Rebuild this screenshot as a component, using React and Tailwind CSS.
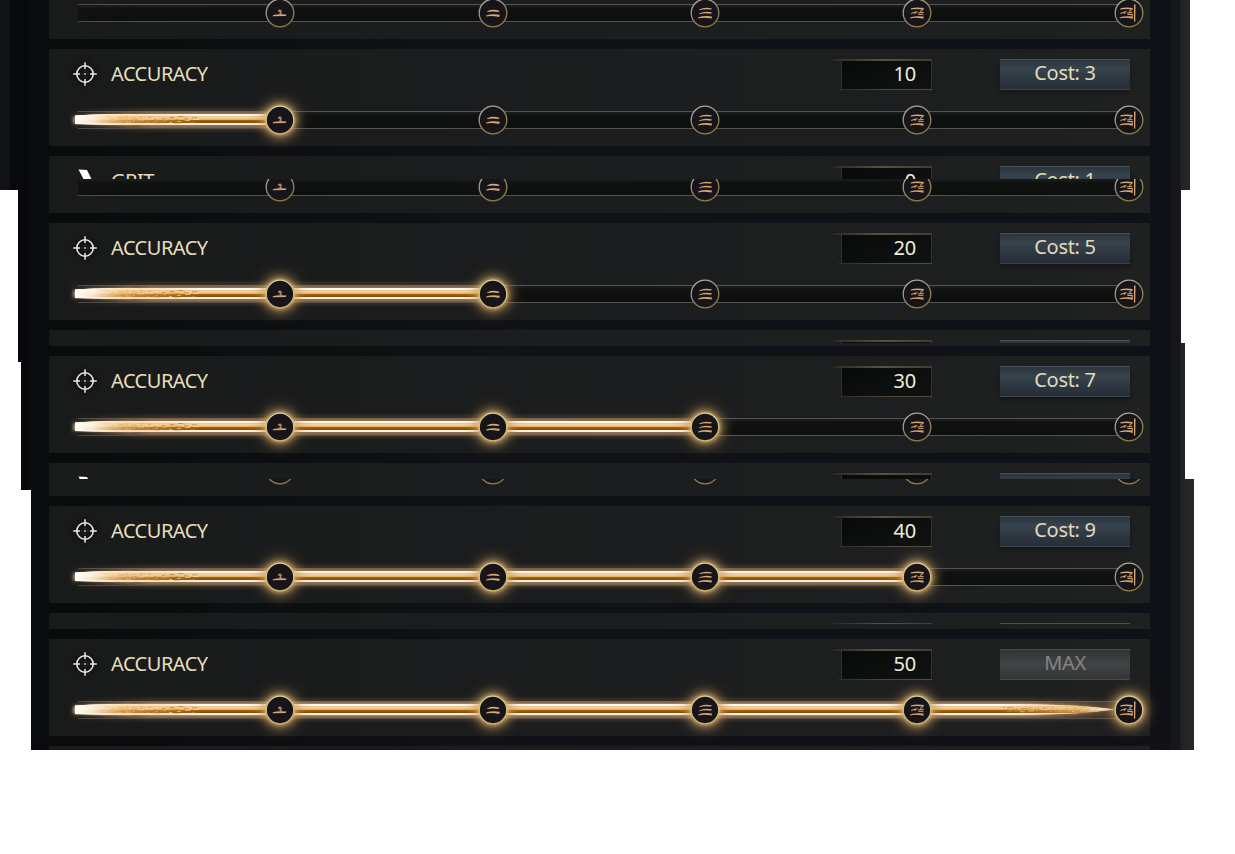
import React from 'react';

const GLYPHS = [
  ['M7.4 15.9 Q13 14.9 20.4 15.6 L19.8 17.1 L6.4 17.3Z', 'M12.3 12.2 L14 11 L15.3 12.4 L14 13.8 M12.4 11.4 L13.4 13 M13.5 14.4 L16 15.2'],
  ['M8.5 12.2 Q13 9.8 20.4 11.7 L20 12.9 Q13 11.8 7.6 13.1Z M7.2 16.4 Q13 14.6 20.8 15.8 L20.2 18 Q13 16.5 7.2 17.4Z', ''],
  ['M8.6 10.2 Q13 7.7 20.8 9.2 L20.2 10.6 Q13 9.7 8.2 11.3Z M8.2 14.4 Q13 11.8 20.8 13.3 L20.2 14.7 Q13 13.7 7.8 15.3Z M7.2 18.4 Q13 16.2 21 17.4 L20.6 19.4 Q13 17.9 7.2 19.4Z', ''],
  ['M8.2 9.2 Q13 8 20.8 8.9 L20.2 10.5 Q13 9.7 7.6 10.5Z M7.2 18.4 Q13 16.4 20.6 17.6 L20.4 19.8 Q13 18.1 7.2 19.4Z', 'M20.6 9.6 L17.2 12.6 M8.2 14.5 L13.2 12.8 L11.8 14.8 M14.5 14 L20.8 13.2 M15.5 15.5 L20.5 15.2'],
  ['M5.6 9.3 Q10 8 17.6 8.9 L17.2 10.5 Q10 9.7 5.2 10.5Z M4.6 18.4 Q10 16.4 17.2 17.6 L17 19.4 Q10 18 4.6 19.3Z M19 5.4 L20.5 5.6 L20.2 22.8 L19 22.6Z', 'M17.4 9.6 L14.2 12.6 M5.4 14.5 L10.6 12.8 L9.2 14.8 M12 14 L17.4 13.2 M12.5 15.5 L17 15.2 M17.3 15 L17.1 20'],
];

function Node({ index, lit }) {
  const [fill, line] = GLYPHS[index];
  return (
    <div
      className={
        lit
          ? 'size-7 rounded-full bg-[#17151a] shadow-[0_0_4px_1px_rgba(240,196,125,0.75),0_0_8px_4px_rgba(200,155,95,0.55),0_0_16px_5px_rgba(180,140,90,0.4)]'
          : 'size-7 rounded-full bg-[#17151a]'
      }
    >
      <svg viewBox="0 0 28 28" className="block size-7 overflow-visible">
        <defs>
          <linearGradient id="ring" x1="0.2" y1="0" x2="0.75" y2="1">
            <stop offset="0" stopColor="#b1b1a4" />
            <stop offset="0.5" stopColor="#928968" />
            <stop offset="1" stopColor="#8a793d" />
          </linearGradient>
          <linearGradient id="ringLit" x1="0" y1="0" x2="0" y2="1">
            <stop offset="0" stopColor="#d3d598" />
            <stop offset="1" stopColor="#cdb56a" />
          </linearGradient>
        </defs>
        <circle cx="14" cy="14" r="13.8" fill="none" stroke={lit ? 'url(#ringLit)' : 'url(#ring)'} strokeWidth="1.3" />
        <path d={fill} fill="#d3a875" />
        {line && <path d={line} fill="none" stroke="#cfa06c" strokeWidth="1.1" />}
      </svg>
    </div>
  );
}

const SPECKS = Array.from({ length: 64 }, (_, i) => ({
  x: 28 + ((i * 37) % 96),
  y: 8.6 + ((i * 13) % 27) / 4,
  w: 2 + ((i * 7) % 5),
  c: ['#b97526', '#ffe9bd', '#9c6110', '#e5a85c'][i % 4],
}));

function Blade({ level }) {
  const w = 2 + level * 212.25;
  const full = level === 5;
  const end = full ? 1041 : w;
  const body = full
    ? 'M3 9.5 Q22 8.4 36 8 H950 Q1012 8.8 1043 13.5 Q1012 18.2 950 19 H36 Q22 18.6 3 18Z'
    : `M3 9.5 Q22 8.4 36 8 H${w} V19 H36 Q22 18.6 3 18Z`;
  return (
    <svg className="absolute left-[-6px] top-0 block h-7 overflow-visible" width={w} height="28" viewBox={`0 0 ${w} 28`}>
      <defs>
        <linearGradient id="metal" x1="0" y1="8" x2="0" y2="19" gradientUnits="userSpaceOnUse">
          <stop offset="0" stopColor="#fff6ec" />
          <stop offset="0.16" stopColor="#fff6ec" />
          <stop offset="0.2" stopColor="#e9c493" />
          <stop offset="0.34" stopColor="#f5d6a0" />
          <stop offset="0.5" stopColor="#e8b568" />
          <stop offset="0.55" stopColor="#a9650f" />
          <stop offset="0.78" stopColor="#874e02" />
          <stop offset="0.83" stopColor="#fff4e6" />
          <stop offset="1" stopColor="#fdeedd" />
        </linearGradient>
        <linearGradient id="halo" x1="0" y1="0" x2="0" y2="27" gradientUnits="userSpaceOnUse">
          <stop offset="0" stopColor="#6b5238" stopOpacity="0" />
          <stop offset="0.17" stopColor="#5b4835" stopOpacity="0.5" />
          <stop offset="0.18" stopColor="#6d5c4c" stopOpacity="0.9" />
          <stop offset="0.22" stopColor="#80674d" stopOpacity="0.95" />
          <stop offset="0.3" stopColor="#957655" />
          <stop offset="0.7" stopColor="#957655" />
          <stop offset="0.81" stopColor="#7a634b" stopOpacity="0.95" />
          <stop offset="0.83" stopColor="#5b4835" stopOpacity="0.5" />
          <stop offset="1" stopColor="#6b5238" stopOpacity="0" />
        </linearGradient>
        <linearGradient id="tip" x1="2" x2="130" y1="0" y2="0" gradientUnits="userSpaceOnUse">
          <stop offset="0" stopColor="#ffffff" />
          <stop offset="0.15" stopColor="#fff4e2" stopOpacity="0.9" />
          <stop offset="0.4" stopColor="#f6c886" stopOpacity="0.5" />
          <stop offset="1" stopColor="#e2a75f" stopOpacity="0" />
        </linearGradient>
        <linearGradient id="point" x1="930" x2="1043" y1="0" y2="0" gradientUnits="userSpaceOnUse">
          <stop offset="0" stopColor="#e2a75f" stopOpacity="0" />
          <stop offset="0.7" stopColor="#eec58a" stopOpacity="0.6" />
          <stop offset="1" stopColor="#ffffff" />
        </linearGradient>
        <linearGradient id="fadeIn" x1="-2" x2="80" y1="0" y2="0" gradientUnits="userSpaceOnUse">
          <stop offset="0" stopColor="#ffffff" stopOpacity="0.03" />
          <stop offset="1" stopColor="#ffffff" />
        </linearGradient>
        <linearGradient id="fadeOut" x1="950" x2="1041" y1="0" y2="0" gradientUnits="userSpaceOnUse">
          <stop offset="0" stopColor="#ffffff" />
          <stop offset="1" stopColor="#ffffff" stopOpacity="0.35" />
        </linearGradient>
        <mask id="startMask" maskUnits="userSpaceOnUse" x="-4" y="0" width="1060" height="28">
          <rect x="-4" width="404" height="28" fill="url(#fadeIn)" />
          <rect x="400" width="650" height="28" fill="url(#fadeOut)" />
        </mask>
        <filter id="soft" filterUnits="userSpaceOnUse" x="-10" y="-6" width="1070" height="40">
          <feGaussianBlur stdDeviation="1.8" />
        </filter>
      </defs>
      <rect x="-3" y="0" width={end + 3} height="27" fill="url(#halo)" mask="url(#startMask)" />
      <path d="M1 10.5 L60 8.5 V18.5 L1 17.5Z" fill="#ffdca8" opacity="0.6" filter="url(#soft)" />
      <path d={body} fill={full ? '#ffcf84' : 'none'} opacity="0.45" filter="url(#soft)" />
      <path d={body} fill="url(#metal)" />
      {SPECKS.map((s, i) => (
        <rect key={i} x={s.x} y={s.y + 1.4} width={s.w} height="1" fill={s.c} opacity="0.6" />
      ))}
      {full &&
        SPECKS.map((s, i) => (
          <rect key={i} x={s.x + 903} y={11 + (s.y - 8.6) * 0.65} width={s.w} height="1" fill={s.c} opacity="0.6" />
        ))}
      <path d="M3 9.5 Q22 8.4 36 8 H130 V19 H36 Q22 18.6 3 18Z" fill="url(#tip)" />
      {full && <path d="M930 8 H950 Q1012 8.8 1043 13.5 Q1012 18.2 950 19 H930Z" fill="url(#point)" />}
    </svg>
  );
}

function Slider({ level }) {
  return (
    <div className="relative ml-[29px] flex h-7 w-[1051px] items-center">
      <div className="mt-[-1px] h-[18px] w-full border-y border-t-[#535351] border-b-[#555352] bg-linear-to-b from-[#191b1b] from-10% via-[#101210] via-20% to-[#0d0f0e] mask-l-from-[94%] mask-l-to-[130%]" />
      {level > 0 && <Blade level={level} />}
      <div className="absolute left-[188.4px] top-0 flex w-[877px] justify-between">
        {GLYPHS.map((_, i) => (
          <Node key={i} index={i} lit={i < level} />
        ))}
      </div>
    </div>
  );
}

function Crosshair() {
  return (
    <svg viewBox="0 0 24 24" className="size-6 drop-shadow-[0_0_3px_#000]" fill="none" stroke="#e9e9e7" strokeWidth="1.6">
      <circle cx="12" cy="12" r="8.2" />
      <path d="M12 0.2V7 M12 17v6.8 M0.2 12H7 M17 12h6.8" strokeWidth="1.5" />
      <path d="M11.2 12h1.6" strokeWidth="1.6" />
      <path d="M8.6 12h0.9 M14.5 12h0.9 M12 8.6v0.9 M12 14.5v0.9" strokeWidth="1" opacity="0.35" />
    </svg>
  );
}

function Shard() {
  return (
    <svg viewBox="0 0 24 24" className="size-6" fill="#ffffff">
      <path d="M5.5 0.5 L14 1 L19.5 12 L12 23 L10.5 10Z" />
    </svg>
  );
}

function ValueBox({ value }) {
  return (
    <div className="relative h-8 w-[91px] border-x border-x-[#31322d] bg-linear-to-br from-[#080909] to-[#111312] bg-clip-content pb-[1px] text-right text-[#f0eedc]">
      <div className="absolute -left-[9px] -right-px top-0 h-[2px] bg-linear-to-r from-[#2b2b28] via-[#56533f] via-50% to-[#3f3e36]" />
      <div className="absolute -left-[4px] -right-px bottom-[1px] h-[1.5px] bg-linear-to-r from-[#2c2b26] via-[#4a493e] to-[#504d3e]" />
      <span className="mr-[15px] tracking-[-0.2px]">{value}</span>
    </div>
  );
}

function CostButton({ children, disabled }) {
  return (
    <div
      className={
        disabled
          ? 'h-[31px] w-[130px] border-y border-t-[#4d4d4d] border-b-[#4b4b4b] bg-linear-to-b from-[#343536] via-[#424345] to-[#333435] text-center leading-[26px] tracking-[-0.3px] text-[#858482]'
          : 'h-[31px] w-[130px] border-y border-t-[#46535c] border-b-[#3b4651] bg-linear-to-b from-[#2c353d] via-[#37434d] via-30% to-[#262d37] text-center leading-[26px] tracking-[-0.3px] text-[#e2dbba] shadow-[0_3px_4px_rgba(0,0,0,0.3)]'
      }
    >
      {children}
    </div>
  );
}

const SURFACE = 'w-[1101px] shrink-0 bg-linear-to-r from-[#191b1b] via-[#1b1d1e] to-[#1f2020]';

function Header({ name, icon, value, cost, disabled }) {
  return (
    <div className="flex h-[57px] items-start pt-[10px] text-[20px] leading-[30px]">
      <div className="ml-[24px] mt-[3px] h-6 w-[38px]">{icon}</div>
      <div className="w-[730px] tracking-[-0.5px] text-[#e6dfbf]">{name}</div>
      <ValueBox value={value} />
      <div className="w-[68px]" />
      <CostButton disabled={disabled}>{cost}</CostButton>
    </div>
  );
}

function Row({ level, value, cost }) {
  return (
    <div className={`h-[97px] ${SURFACE}`}>
      <Header name="ACCURACY" icon={<Crosshair />} value={value} cost={cost} disabled={level === 5} />
      <Slider level={level} />
    </div>
  );
}

function RowTop({ className, children }) {
  return <div className={`overflow-hidden ${SURFACE} ${className}`}>{children}</div>;
}

function RowBottom({ className }) {
  return (
    <div className={`flex flex-col justify-end overflow-hidden ${SURFACE} ${className}`}>
      <div className="h-10 shrink-0">
        <Slider level={0} />
      </div>
    </div>
  );
}

export default function App() {
  return (
    <div className="h-[854px] w-[1235px] overflow-hidden bg-white font-['Noto_Sans',sans-serif]">
      <div className="flex h-[750px] w-[1194px] flex-col gap-[10px] overflow-hidden bg-[linear-gradient(90deg,#111318_0,#101216_10px,#08090b_10px,#08090c_28px,#0a0b0e_30px,#090b0d_80px,#101217_500px,#0f1116_1170px,#15171c_1170px,#15171c_1180px,#212225_1181px,#28292b_1194px)] pl-[49px] [clip-path:polygon(0_0,1190px_0,1190px_190px,1181px_190px,1181px_343px,1185px_343px,1185px_479px,1194px_479px,1194px_750px,31px_750px,31px_490px,21px_490px,21px_362px,18px_362px,18px_190px,0_190px)]">
        <RowBottom className="h-[39px]" />
        <Row level={1} value={10} cost="Cost: 3" />
        <div>
          <RowTop className="h-[23px]">
            <Header name="GRIT" icon={<Shard />} value={0} cost="Cost: 1" />
          </RowTop>
          <RowBottom className="h-[34px]" />
        </div>
        <Row level={2} value={20} cost="Cost: 5" />
        <div>
          <RowTop className="h-[13px]"><Header /></RowTop>
          <RowTop className="h-[3px]" />
        </div>
        <Row level={3} value={30} cost="Cost: 7" />
        <div>
          <RowTop className="h-[16px]"><Header icon={<Shard />} /></RowTop>
          <RowBottom className="h-[17px]" />
        </div>
        <Row level={4} value={40} cost="Cost: 9" />
        <div>
          <RowTop className="h-[11px]"><Header disabled /></RowTop>
          <RowTop className="h-[5px]" />
        </div>
        <Row level={5} value={50} cost="MAX" />
        <RowTop className="h-[4px]" />
      </div>
    </div>
  );
}
